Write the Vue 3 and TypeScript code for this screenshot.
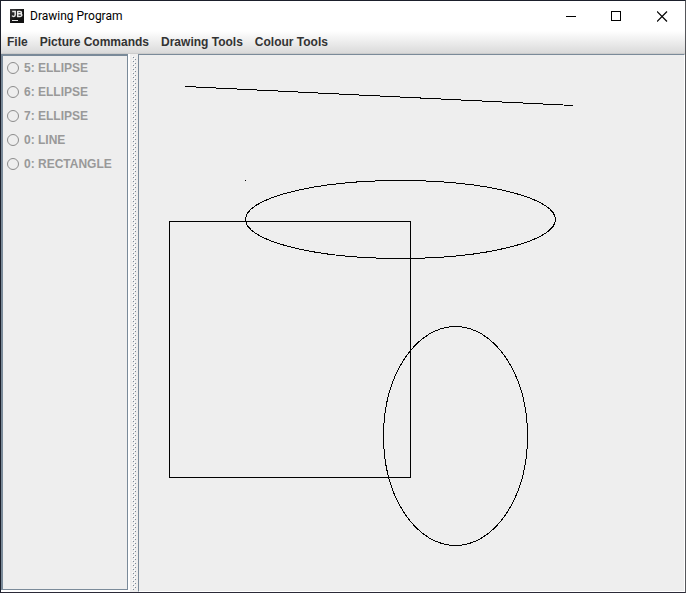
<script setup lang="ts">
import { ref } from 'vue'

interface ShapeItem {
  id: string
  label: string
}

const menus: string[] = ['File', 'Picture Commands', 'Drawing Tools', 'Colour Tools']

const shapes: ShapeItem[] = [
  { id: 'shape-5', label: '5: ELLIPSE' },
  { id: 'shape-6', label: '6: ELLIPSE' },
  { id: 'shape-7', label: '7: ELLIPSE' },
  { id: 'shape-line', label: '0: LINE' },
  { id: 'shape-rect', label: '0: RECTANGLE' },
]

const selected = ref<string>('')
</script>

<template>
  <div class="window">
    <header class="titlebar">
      <svg class="logo" width="14" height="14" viewBox="0 0 14 14" aria-hidden="true">
        <defs>
          <linearGradient id="logo-fill" x1="0" y1="0" x2="1" y2="1">
            <stop offset="0" stop-color="#3a3a3c" />
            <stop offset="0.6" stop-color="#111" />
          </linearGradient>
        </defs>
        <rect width="14" height="14" fill="url(#logo-fill)" />
        <g fill="none" stroke="#e8e8e8" stroke-width="1.5">
          <path d="M2.2 2.6H5.2V5.8Q5.2 7.4 3.7 7.4Q2.6 7.4 2 6.6" />
          <path d="M7.7 2.6H10Q11.5 2.6 11.5 3.7Q11.5 4.8 10 4.8H7.7M10 4.8Q11.9 4.8 11.9 6.1Q11.9 7.4 10.2 7.4H7.7V2" />
        </g>
        <rect x="2" y="11" width="6" height="1" fill="#e8e8e8" />
      </svg>
      <h1 class="title">Drawing Program</h1>
      <div class="controls">
        <button type="button" aria-label="Minimize">
          <svg width="11" height="11" viewBox="0 0 11 11"><path d="M1 5.5H11" /></svg>
        </button>
        <button type="button" aria-label="Maximize">
          <svg width="11" height="11" viewBox="0 0 11 11"><path d="M.5 .5H9.5V9.5H.5Z" /></svg>
        </button>
        <button type="button" aria-label="Close">
          <svg width="11" height="11" viewBox="0 0 11 11"><path class="cross" d="M0 .5L10 10.5M10 .5L0 10.5" /></svg>
        </button>
      </div>
    </header>

    <nav class="menubar">
      <button v-for="menu in menus" :key="menu" type="button">{{ menu }}</button>
    </nav>

    <main class="split">
      <div class="list">
        <label v-for="shape in shapes" :key="shape.id" :for="shape.id">
          <input :id="shape.id" v-model="selected" type="radio" name="shape" :value="shape.id" disabled />
          <span>{{ shape.label }}</span>
        </label>
      </div>
      <div class="divider">
        <svg width="100%" height="100%" aria-hidden="true">
          <defs>
            <pattern id="bumps" width="4" height="4" patternUnits="userSpaceOnUse">
              <rect x="0" y="0" width="1" height="1" fill="#fff" />
              <rect x="1" y="1" width="1" height="1" fill="#7a8a99" />
              <rect x="2" y="2" width="1" height="1" fill="#fff" />
              <rect x="3" y="3" width="1" height="1" fill="#7a8a99" />
            </pattern>
          </defs>
          <rect width="100%" height="100%" fill="url(#bumps)" />
        </svg>
      </div>
      <div class="canvas">
        <svg width="100%" height="100%">
          <g fill="none" stroke="#000" stroke-width="1" shape-rendering="crispEdges">
            <line x1="46.5" y1="31.5" x2="434.5" y2="50.5" />
            <rect x="30.5" y="166.5" width="241" height="256" />
            <ellipse cx="261.5" cy="164.5" rx="155" ry="39" />
            <ellipse cx="316.5" cy="381" rx="72" ry="109.5" />
          </g>
          <rect x="106" y="125" width="1" height="1" />
        </svg>
      </div>
    </main>
  </div>
</template>

<style>
body {
  margin: 0;
}
</style>

<style scoped>
.window {
  box-sizing: border-box;
  display: flex;
  flex-direction: column;
  height: 100vh;
  border: 1px solid #1b1f2b;
  border-right-color: #55565a;
  border-bottom-color: #2b2a38;
  background: #fff;
  font-family: "Liberation Sans", Arial, sans-serif;
}

.titlebar {
  display: flex;
  align-items: center;
  height: 30px;
  padding-left: 9px;
}

.logo {
  flex: none;
}

.title {
  flex: 1;
  margin: 0 0 0 6px;
  font: 400 12px/16px Roboto, "Segoe UI", sans-serif;
  color: #000;
}

.controls {
  display: flex;
  align-self: stretch;
}

.controls button {
  display: flex;
  align-items: center;
  justify-content: center;
  width: 46px;
  padding: 0;
  border: 0;
  background: none;
}

.controls path {
  fill: none;
  stroke: #000;
  stroke-width: 1;
  shape-rendering: crispEdges;
}

.controls .cross {
  stroke-width: 1.2;
  shape-rendering: auto;
}

.menubar {
  box-sizing: border-box;
  display: flex;
  align-items: center;
  gap: 12px;
  height: 23px;
  padding: 0 6px;
  border-bottom: 1px solid #ccc;
  background: linear-gradient(#fff, #dadada);
}

.menubar button {
  padding: 0;
  border: 0;
  background: none;
  font: bold 12px/20px "Liberation Sans", Arial, sans-serif;
  color: #333;
}

.split {
  flex: 1;
  display: flex;
  min-height: 0;
  background: #eee;
}

.list {
  box-sizing: border-box;
  display: flex;
  flex-direction: column;
  width: 127px;
  margin: 0 0 2px;
  padding: 0 0 0 4px;
  border: 1px solid #7a8a99;
  border-width: 2px 1px 1px 2px;
  box-shadow: 1px 1px 0 1px #fff;
}

.list label {
  display: flex;
  align-items: center;
  gap: 5px;
  height: 24px;
  font: bold 12px/16px "Liberation Sans", Arial, sans-serif;
  color: #999;
}

.list input {
  appearance: none;
  box-sizing: border-box;
  width: 12px;
  height: 12px;
  margin: 0;
  border: 1px solid #8c8c8c;
  border-radius: 50%;
}

.divider {
  width: 4px;
  margin: 2px 2px 2px 4px;
}

.divider svg,
.canvas svg {
  display: block;
}

.canvas {
  flex: 1;
  min-width: 0;
  border: 1px solid #7a8a99;
  border-right-color: #fff;
  border-bottom-color: #fff;
}
</style>
